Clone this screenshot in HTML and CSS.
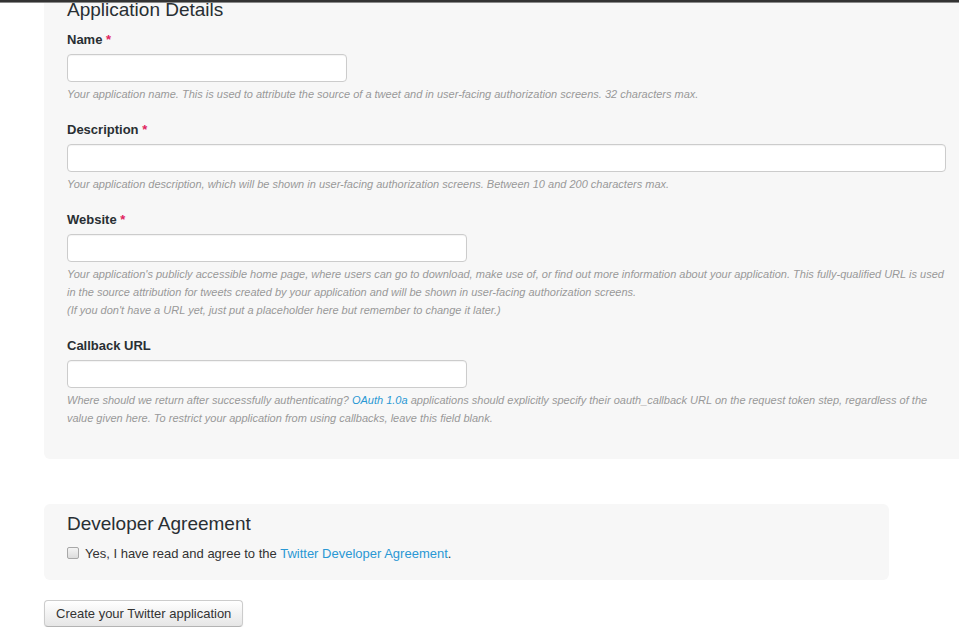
FILE: index.html
```html
<!DOCTYPE html>
<html>
<head>
<meta charset="utf-8">
<link rel="stylesheet" href="styles.css">
</head>
<body>
<div class="topbar"></div>
<div class="page">
  <section class="panel details">
    <h3 class="panel-title">Application Details</h3>
    <div class="field">
      <label class="label">Name <span class="req">*</span></label>
      <input class="input w280" type="text">
      <p class="help">Your application name. This is used to attribute the source of a tweet and in user-facing authorization screens. 32 characters max.</p>
    </div>
    <div class="field">
      <label class="label">Description <span class="req">*</span></label>
      <input class="input wfull" type="text">
      <p class="help">Your application description, which will be shown in user-facing authorization screens. Between 10 and 200 characters max.</p>
    </div>
    <div class="field">
      <label class="label">Website <span class="req">*</span></label>
      <input class="input w400" type="text">
      <p class="help">Your application's publicly accessible home page, where users can go to download, make use of, or find out more information about your application. This fully-qualified URL is used in the source attribution for tweets created by your application and will be shown in user-facing authorization screens.<br>(If you don't have a URL yet, just put a placeholder here but remember to change it later.)</p>
    </div>
    <div class="field last">
      <label class="label">Callback URL</label>
      <input class="input w400" type="text">
      <p class="help">Where should we return after successfully authenticating? <a class="link" href="#">OAuth 1.0a</a> applications should explicitly specify their oauth_callback URL on the request token step, regardless of the value given here. To restrict your application from using callbacks, leave this field blank.</p>
    </div>
  </section>

  <section class="panel agreement">
    <h3 class="panel-title">Developer Agreement</h3>
    <label class="check-row"><span class="checkbox"></span>Yes, I have read and agree to the <a class="link" href="#">Twitter Developer Agreement</a>.</label>
  </section>

  <button class="btn" type="button">Create your Twitter application</button>
</div>
</body>
</html>
```

FILE: styles.css
```css
html, body {
  margin: 0;
  padding: 0;
  background: #fff;
}
body {
  font-family: "Liberation Sans", Arial, sans-serif;
  color: #333;
  font-size: 13px;
  line-height: 18px;
  overflow: hidden;
}
.topbar {
  position: fixed;
  top: 0;
  left: 0;
  right: 0;
  height: 2px;
  background: #333;
  border-bottom: 1px solid #8a8a8a;
  z-index: 10;
}
.page {
  padding-left: 44px;
}
.panel {
  background: #f7f7f7;
}
.details {
  padding: 0 13px 32px 23px;
  border-bottom-left-radius: 6px;
}
.panel-title {
  margin: 0 0 11px;
  font-size: 19px;
  line-height: 20px;
  font-weight: normal;
  color: #292f33;
}
.field {
  margin-bottom: 18px;
}
.field.last {
  margin-bottom: 0;
}
.label {
  display: block;
  font-weight: bold;
  line-height: 18px;
  margin-bottom: 5px;
  color: #292f33;
}
.req {
  color: #e0245e;
}
.input {
  display: block;
  box-sizing: border-box;
  height: 28px;
  margin: 0;
  padding: 4px 6px;
  background: #fff;
  border: 1px solid #ccc;
  border-radius: 4px;
  box-shadow: inset 0 1px 1px rgba(0,0,0,0.05);
  font-family: inherit;
  font-size: 13px;
}
.w280 { width: 280px; }
.w400 { width: 400px; }
.wfull { width: 100%; }
.help {
  margin: 3px 0 0;
  font-size: 11px;
  line-height: 18px;
  font-style: italic;
  color: #999;
}
.link {
  color: #2a98d4;
  text-decoration: none;
}
.agreement {
  margin-top: 45px;
  width: 845px;
  box-sizing: border-box;
  padding: 10px 23px 17px;
  border-radius: 6px;
}
.check-row {
  display: block;
  line-height: 18px;
  color: #333;
}
.checkbox {
  display: inline-block;
  vertical-align: -1px;
  width: 10px;
  height: 10px;
  margin-right: 6px;
  border: 1px solid #a8a8a8;
  border-radius: 2px;
  background: linear-gradient(#f4f4f4, #dcdcdc);
}
.btn {
  display: block;
  margin-top: 20px;
  height: 27px;
  padding: 0 11px;
  font-family: inherit;
  font-size: 13px;
  color: #333;
  background: linear-gradient(#fff, #e6e6e6);
  border: 1px solid #ccc;
  border-bottom-color: #b3b3b3;
  border-radius: 4px;
  box-shadow: 0 1px 2px rgba(0,0,0,0.05);
}
```
